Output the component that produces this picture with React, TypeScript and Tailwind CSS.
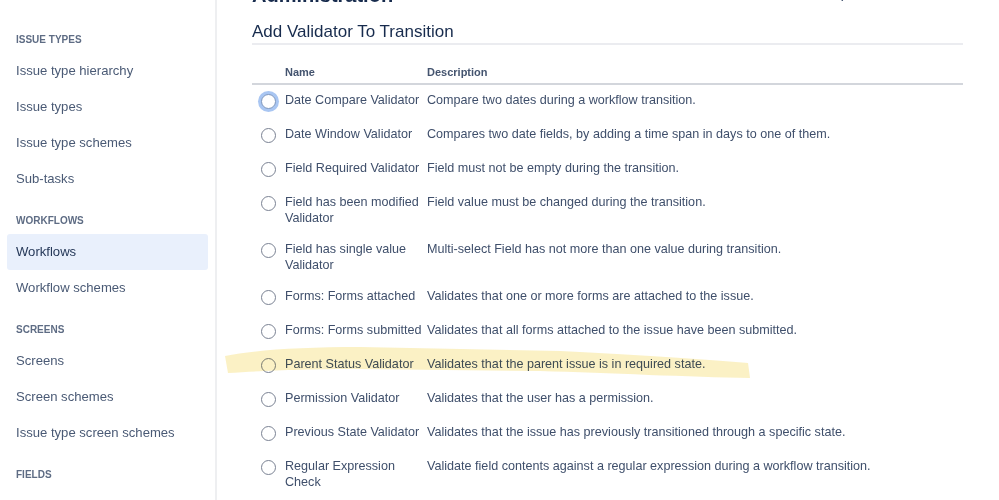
import { Search } from 'lucide-react';

type Validator = {
  name: string[];
  description: string;
};

const sections: { title: string; items: string[] }[] = [
  { title: 'Issue types', items: ['Issue type hierarchy', 'Issue types', 'Issue type schemes', 'Sub-tasks'] },
  { title: 'Workflows', items: ['Workflows', 'Workflow schemes'] },
  { title: 'Screens', items: ['Screens', 'Screen schemes', 'Issue type screen schemes'] },
  { title: 'Fields', items: [] },
];

const validators: Validator[] = [
  { name: ['Date Compare Validator'], description: 'Compare two dates during a workflow transition.' },
  { name: ['Date Window Validator'], description: 'Compares two date fields, by adding a time span in days to one of them.' },
  { name: ['Field Required Validator'], description: 'Field must not be empty during the transition.' },
  { name: ['Field has been modified', 'Validator'], description: 'Field value must be changed during the transition.' },
  { name: ['Field has single value', 'Validator'], description: 'Multi-select Field has not more than one value during transition.' },
  { name: ['Forms: Forms attached'], description: 'Validates that one or more forms are attached to the issue.' },
  { name: ['Forms: Forms submitted'], description: 'Validates that all forms attached to the issue have been submitted.' },
  { name: ['Parent Status Validator'], description: 'Validates that the parent issue is in required state.' },
  { name: ['Permission Validator'], description: 'Validates that the user has a permission.' },
  { name: ['Previous State Validator'], description: 'Validates that the issue has previously transitioned through a specific state.' },
  { name: ['Regular Expression', 'Check'], description: 'Validate field contents against a regular expression during a workflow transition.' },
];

function Sidebar() {
  return (
    <aside className="w-[217px] shrink-0 border-r-2 border-[#eeeff1] pt-[32px]">
      {sections.map((section, i) => (
        <div key={section.title} className={i > 0 ? 'mt-4' : ''}>
          <div className="px-4 mb-[5px] h-4 leading-4 text-[10px] font-bold uppercase text-[#5e6c84]">
            {section.title}
          </div>
          {section.items.map((item) => {
            const active = item === 'Workflows';
            return (
              <div
                key={item}
                className={
                  'mx-[7px] h-9 px-[9px] flex items-center rounded-[3px] text-[13.1px] ' +
                  (active ? 'bg-[#e9f0fc] text-[#253858]' : 'text-[#4a5a75]')
                }
              >
                {item}
              </div>
            );
          })}
        </div>
      ))}
    </aside>
  );
}

function Radio({ focused }: { focused?: boolean }) {
  return (
    <div className="h-[19px] flex items-center">
      <div
        className={
          'w-[15px] h-[15px] rounded-full bg-white border-[1.5px] ml-[9px] ' +
          (focused ? 'border-[#7e97bd] ring-[3px] ring-[#a9c6f2]' : 'border-[#7a8293]')
        }
      />
    </div>
  );
}

export default function App() {
  return (
    <div
      className="relative w-[999px] h-[500px] overflow-hidden bg-white flex"
      style={{ fontFamily: '"Liberation Sans", Arial, sans-serif' }}
    >
      <Sidebar />

      <main className="flex-1 pl-[35px] pr-[36px]">
        {/* page header, scrolled mostly out of view */}
        <div className="-mt-[17px] h-6 leading-6 flex items-center justify-between">
          <h1 className="text-[20px] font-semibold text-[#172b4d]">Administration</h1>
          <div className="flex items-center gap-1 pr-[10px] text-[13px] text-[#42526e]">
            <Search className="w-[13px] h-[13px]" strokeWidth={2.5} />
            <span>Search Jira admin</span>
          </div>
        </div>

        <h2 className="mt-[14px] text-[17px] leading-[22px] text-[#172b4d] border-b-2 border-[#ebecf0]">
          Add Validator To Transition
        </h2>

        <table className="w-full table-fixed text-[12.6px] leading-4 text-[#3f4f6b] border-collapse">
          <colgroup>
            <col className="w-[33px]" />
            <col className="w-[142px]" />
            <col />
          </colgroup>
          <thead>
            <tr className="border-b-2 border-[#d3d6dc]">
              <th />
              <th className="pt-[19px] pb-[3px] text-left text-[11px] font-semibold text-[#44546f]">Name</th>
              <th className="pt-[19px] pb-[3px] text-left text-[11px] font-semibold text-[#44546f]">Description</th>
            </tr>
          </thead>
          <tbody>
            {validators.map((v, i) => (
              <tr key={v.name.join(' ')}>
                <td className="pt-[7px] pb-[8px] align-top">
                  <Radio focused={i === 0} />
                </td>
                <td className="pt-[7px] pb-[8px] align-top">
                  {v.name.map((line) => (
                    <div key={line} className="whitespace-nowrap">
                      {line}
                    </div>
                  ))}
                </td>
                <td className="pt-[7px] pb-[8px] align-top">{v.description}</td>
              </tr>
            ))}
          </tbody>
        </table>
      </main>

      {/* highlighter stroke over the Parent Status row */}
      <svg className="absolute left-0 top-0 pointer-events-none mix-blend-multiply" width="999" height="500">
        <path
          d="M225,356 C255,350 300,347 360,347 L560,351 C640,355 700,359 748,363 L750,378 C690,377 610,373 540,371 L360,369 C300,369 262,371 228,373 Z"
          fill="#f8e38c"
          opacity="0.5"
        />
      </svg>
    </div>
  );
}
